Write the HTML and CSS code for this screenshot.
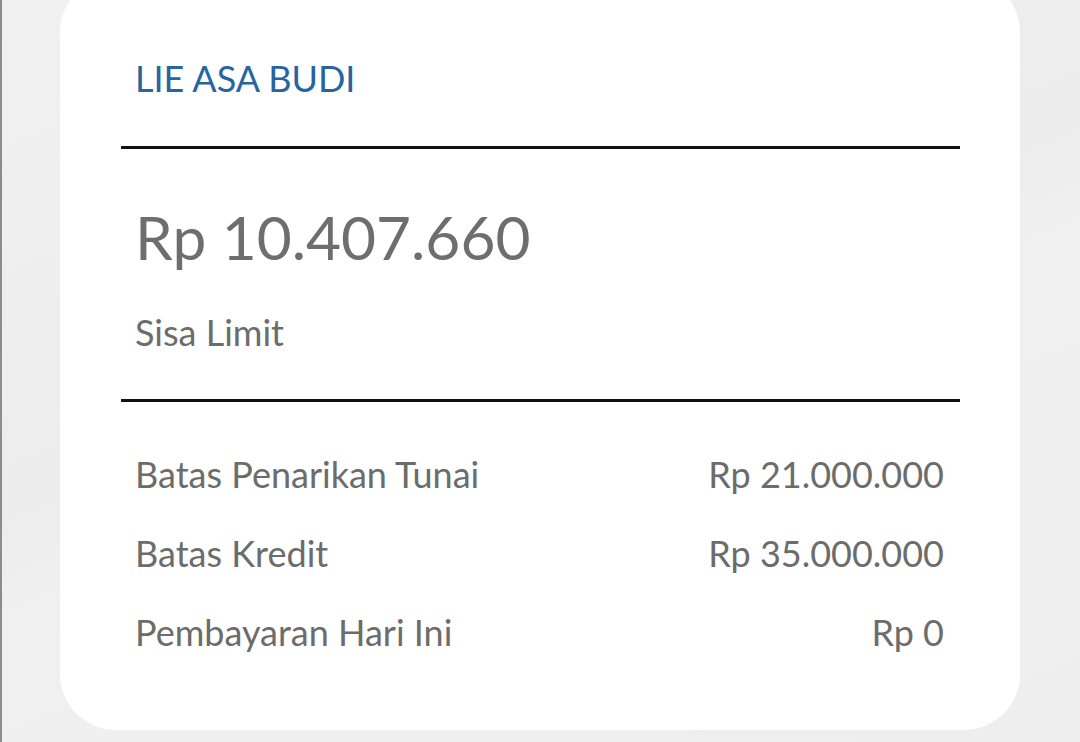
FILE: index.html
```html
<!DOCTYPE html>
<html lang="id">
<head>
<meta charset="utf-8">
<title>Kartu Kredit</title>
<link rel="stylesheet" href="styles.css">
</head>
<body>
<div class="page">
  <section class="card">
    <div class="holder">LIE ASA BUDI</div>
    <div class="rule rule-top"></div>
    <div class="amount">Rp 10.407.660</div>
    <div class="amount-label">Sisa Limit</div>
    <div class="rule rule-bottom"></div>
    <div class="rows">
      <div class="row"><span class="row-label">Batas Penarikan Tunai</span><span class="row-value">Rp 21.000.000</span></div>
      <div class="row"><span class="row-label">Batas Kredit</span><span class="row-value">Rp 35.000.000</span></div>
      <div class="row"><span class="row-label">Pembayaran Hari Ini</span><span class="row-value">Rp 0</span></div>
    </div>
  </section>
</div>
</body>
</html>
```

FILE: styles.css
```css
html, body {
  margin: 0;
  padding: 0;
}
body {
  width: 1080px;
  height: 742px;
  overflow: hidden;
  background: linear-gradient(160deg, #f1f1f2 0%, #ececed 45%, #f0f0f1 55%, #eeeeef 100%);
  font-family: Lato, "Noto Sans", sans-serif;
  color: #6c6c6c;
}
.page {
  display: flow-root;
  height: 742px;
  border-left: 2px solid #8c8c8c;
  box-sizing: border-box;
  padding-left: 58px;
}
.card {
  margin-top: -24px;
  width: 960px;
  height: 754px;
  box-sizing: border-box;
  background: #ffffff;
  border-radius: 56px;
  padding: 80px 60px 0 61px;
  display: flex;
  flex-direction: column;
}
.holder {
  font-size: 36px;
  line-height: 44px;
  color: #2765a1;
  padding: 0 16px 0 14px;
}
.rule {
  height: 3px;
  background: #111111;
}
.rule-top {
  margin-top: 46px;
}
.amount {
  margin-top: 52px;
  font-size: 60.4px;
  line-height: 72px;
  padding: 0 16px 0 14px;
  color: #6e6e6e;
}
.amount-label {
  margin-top: 39px;
  font-size: 36px;
  line-height: 40px;
  padding: 0 16px 0 14px;
}
.rule-bottom {
  margin-top: 47px;
}
.rows {
  margin-top: 33px;
  padding: 0 16px 0 14px;
  display: flex;
  flex-direction: column;
}
.row {
  display: flex;
  justify-content: space-between;
  font-size: 36px;
  line-height: 79px;
}
```
